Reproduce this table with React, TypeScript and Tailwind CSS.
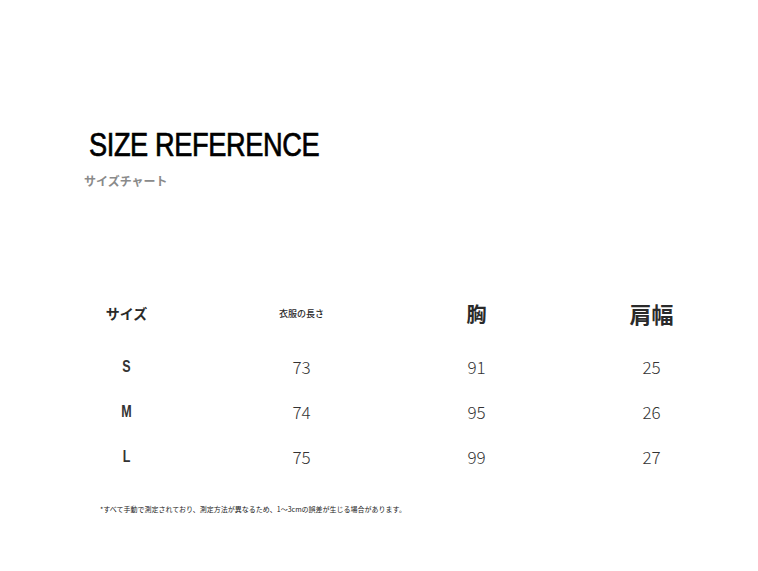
export default function App() {
  const rows = [
    { s: "S", a: "73", b: "91", c: "25" },
    { s: "M", a: "74", b: "95", c: "26" },
    { s: "L", a: "75", b: "99", c: "27" },
  ];
  const jp = { fontFamily: '"Noto Sans CJK JP", "Noto Sans", sans-serif' };
  const lib = { fontFamily: '"Liberation Sans", Arial, sans-serif' };
  return (
    <div className="w-[758px] h-[571px] bg-white overflow-hidden" style={jp}>
      <div className="pt-[124px] pl-[89px]">
        <h1
          className="inline-block origin-left scale-x-[0.8] text-[34px] leading-[40px] font-normal tracking-[-0.5px] text-black [-webkit-text-stroke:0.7px_black]"
          style={lib}
        >
          SIZE REFERENCE
        </h1>
      </div>
      <div className="pl-[84px] mt-[9px] text-[12px] leading-[16px] font-bold text-[#8a8a8a]">
        サイズチャート
      </div>

      <div className="mt-[108px] ml-[39px] w-[700px]">
        <div className="grid grid-cols-4 h-[30px] items-center text-center text-[#2a2a2a] font-bold">
          <div className="text-[14px]">サイズ</div>
          <div className="text-[9px] font-medium">衣服の長さ</div>
          <div className="text-[20px]">胸</div>
          <div className="text-[22px]">肩幅</div>
        </div>
        <div className="mt-[27px] flex flex-col gap-[25px]">
          {rows.map((r) => (
            <div
              key={r.s}
              className="grid grid-cols-4 h-[20px] items-center text-center text-[#333]"
            >
              <div className="text-[16px] font-bold scale-x-[0.78]" style={lib}>
                {r.s}
              </div>
              <div className="text-[17px] font-light">{r.a}</div>
              <div className="text-[17px] font-light">{r.b}</div>
              <div className="text-[17px] font-light">{r.c}</div>
            </div>
          ))}
        </div>
      </div>

      <div className="mt-[40px] pl-[100px] text-[7px] leading-[10px] text-[#222]">
        *すべて手動で測定されており、測定方法が異なるため、1～3cmの誤差が生じる場合があります。
      </div>
    </div>
  );
}
